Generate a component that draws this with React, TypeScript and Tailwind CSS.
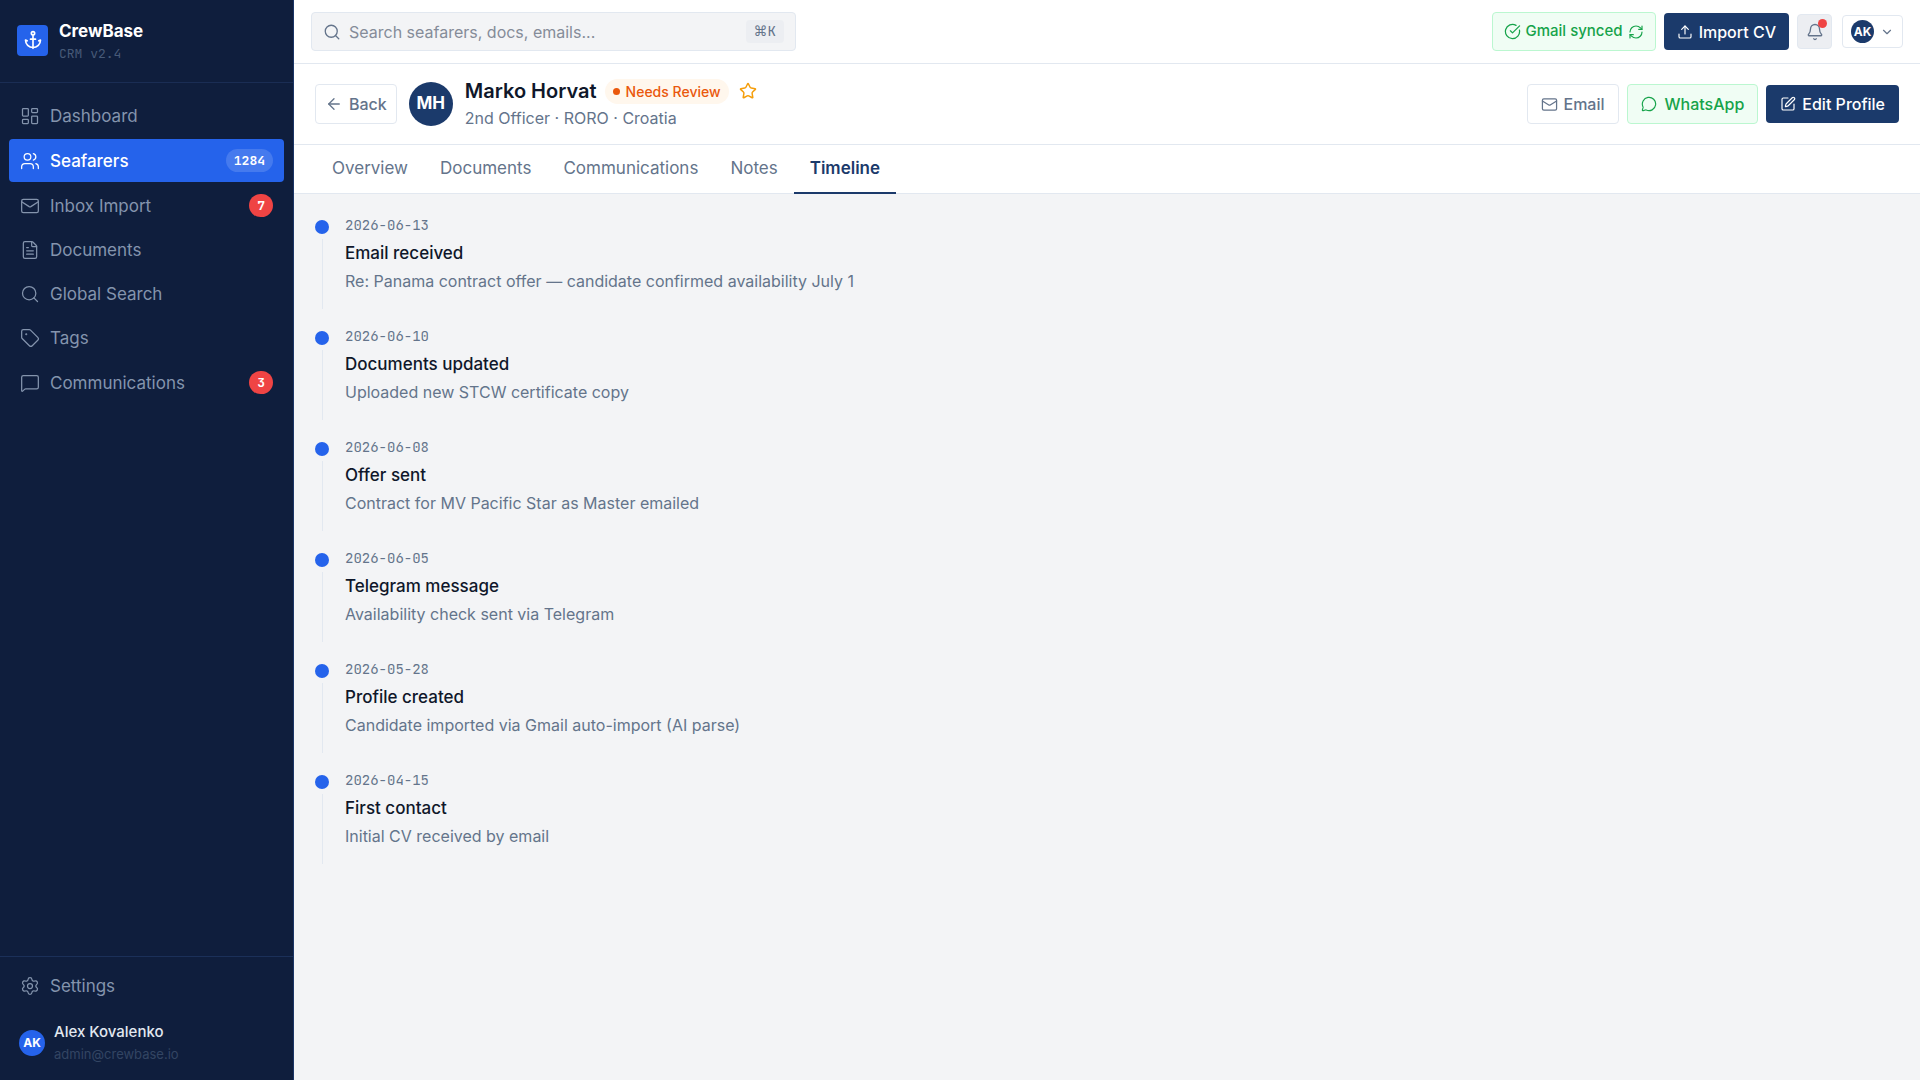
import { useState } from "react";
import {
  Anchor,
  ArrowLeft,
  Bell,
  ChevronDown,
  CircleCheckBig,
  FileText,
  LayoutDashboard,
  Mail,
  MessageCircle,
  MessageSquare,
  RefreshCw,
  Search,
  Settings,
  SquarePen,
  Star,
  Tag,
  Upload,
  Users,
  type LucideIcon,
} from "lucide-react";

interface NavItem {
  label: string;
  icon: LucideIcon;
  count?: number;
}

interface TimelineEvent {
  date: string;
  title: string;
  description: string;
}

const mono = "font-['JetBrains_Mono','DejaVu_Sans_Mono',monospace]";

const navItems: NavItem[] = [
  { label: "Dashboard", icon: LayoutDashboard },
  { label: "Seafarers", icon: Users, count: 1284 },
  { label: "Inbox Import", icon: Mail, count: 7 },
  { label: "Documents", icon: FileText },
  { label: "Global Search", icon: Search },
  { label: "Tags", icon: Tag },
  { label: "Communications", icon: MessageSquare, count: 3 },
];

const tabs = ["Overview", "Documents", "Communications", "Notes", "Timeline"];

const events: TimelineEvent[] = [
  {
    date: "2026-06-13",
    title: "Email received",
    description: "Re: Panama contract offer — candidate confirmed availability July 1",
  },
  { date: "2026-06-10", title: "Documents updated", description: "Uploaded new STCW certificate copy" },
  { date: "2026-06-08", title: "Offer sent", description: "Contract for MV Pacific Star as Master emailed" },
  { date: "2026-06-05", title: "Telegram message", description: "Availability check sent via Telegram" },
  { date: "2026-05-28", title: "Profile created", description: "Candidate imported via Gmail auto-import (AI parse)" },
  { date: "2026-04-15", title: "First contact", description: "Initial CV received by email" },
];

function Sidebar() {
  const [active, setActive] = useState("Seafarers");

  return (
    <aside className="w-[294px] shrink-0 flex flex-col bg-[#0f1e3d] border-r border-[#1b3566]">
      <div className="flex items-center gap-[11px] px-[17px] pt-[17px] pb-[19px] border-b border-[#1a2d54]">
        <div className="w-[31px] h-[31px] rounded-sm bg-[#2563eb] flex items-center justify-center">
          <Anchor className="w-5 h-5 text-white" />
        </div>
        <div>
          <div className="text-[17px] leading-7 font-bold text-white">CrewBase</div>
          <div className={`text-[13px] leading-[18px] text-[#475a78] ${mono}`}>CRM v2.4</div>
        </div>
      </div>

      <nav className="flex-1 flex flex-col gap-0.5 px-[9px] pt-3">
        {navItems.map(({ label, icon: Icon, count }) => {
          const isActive = label === active;
          return (
            <button
              key={label}
              onClick={() => setActive(label)}
              className={`flex items-center gap-2.5 px-[11px] py-2.5 rounded-sm text-[17px] leading-[22px] text-left ${
                isActive ? "bg-[#2563eb] text-white font-medium" : "text-[#8494ad] hover:text-white"
              }`}
            >
              <Icon className="w-5 h-5 shrink-0" strokeWidth={1.5} />
              <span className="flex-1">{label}</span>
              {count !== undefined && (
                <span
                  className={`px-2 rounded-full text-[13px] leading-[23px] font-bold text-white ${mono} ${
                    isActive ? "bg-white/15" : "bg-[#ef4444]"
                  }`}
                >
                  {count}
                </span>
              )}
            </button>
          );
        })}
      </nav>

      <div className="border-t border-[#1b3059] px-[9px] pt-2">
        <button className="w-full flex items-center gap-2.5 px-[11px] py-2.5 text-[17px] leading-[22px] text-[#8494ad] text-left">
          <Settings className="w-5 h-5" strokeWidth={1.5} />
          Settings
        </button>
        <div className="flex items-center gap-[9px] px-2.5 pt-3.5 pb-[15px]">
          <div className="w-[26px] h-[26px] rounded-full bg-[#2563eb] flex items-center justify-center text-xs font-bold text-white">
            AK
          </div>
          <div>
            <div className="text-[15px] leading-[22px] font-medium text-slate-200">Alex Kovalenko</div>
            <div className="text-[13px] leading-[22px] text-[#334563]">admin@crewbase.io</div>
          </div>
        </div>
      </div>
    </aside>
  );
}

function TopBar() {
  return (
    <header className="flex items-center justify-between px-[17px] py-3 bg-white border-b border-[#e2e8f0]">
      <label className="w-[485px] h-[39px] flex items-center gap-2 px-[11px] rounded-sm border border-[#e2e8f0] bg-[#f3f4f6]">
        <Search className="w-[18px] h-[18px] shrink-0 text-[#64748b]" strokeWidth={1.75} />
        <input
          type="text"
          aria-label="Search"
          placeholder="Search seafarers, docs, emails..."
          className="flex-1 min-w-0 bg-transparent outline-none text-base placeholder:text-[#858c99]"
        />
        <kbd className={`px-2 rounded-sm bg-[#eceef2] text-sm leading-[23px] text-[#64748b] ${mono}`}>
          <span className="font-['DejaVu_Sans',sans-serif]">⌘</span>K
        </kbd>
      </label>

      <div className="flex items-center gap-2">
        <button className="h-[39px] flex items-center gap-[5px] px-[11px] rounded-sm border border-[#bbf7d0] bg-[#f0fdf4] text-[15px] font-medium text-[#16a34a]">
          <CircleCheckBig className="w-[17px] h-[17px]" strokeWidth={1.75} />
          Gmail synced
          <RefreshCw className="w-4 h-4" strokeWidth={1.75} />
        </button>
        <button className="h-[37px] flex items-center gap-1.5 px-[13px] rounded-sm bg-[#1b3a6b] text-base font-medium text-white">
          <Upload className="w-4 h-4" strokeWidth={1.75} />
          Import CV
        </button>
        <button
          aria-label="Notifications"
          className="relative w-[35px] h-[35px] flex items-center justify-center rounded-sm border border-[#e2e8f0] bg-[#eceef2] text-[#64748b]"
        >
          <Bell className="w-[18px] h-[18px]" strokeWidth={1.75} />
          <span className="absolute top-1 right-1 w-[9px] h-[9px] rounded-full bg-[#ef4444]" />
        </button>
        <button
          aria-label="Account"
          className="ml-0.5 h-[33px] flex items-center gap-1.5 px-2 rounded-sm border border-[#e2e8f0] text-[#64748b]"
        >
          <span className="w-[23px] h-[23px] rounded-full bg-[#1b3a6b] flex items-center justify-center text-xs font-bold text-white">
            AK
          </span>
          <ChevronDown className="w-3.5 h-3.5" />
        </button>
      </div>
    </header>
  );
}

function ProfileHeader() {
  const [starred, setStarred] = useState(false);

  return (
    <div className="flex items-center justify-between px-[21px] py-3.5 bg-white border-b border-[#e2e8f0]">
      <div className="flex items-center gap-3">
        <button className="h-10 flex items-center gap-1.5 px-[9px] rounded-sm border border-[#e2e8f0] text-base font-medium text-[#64748b]">
          <ArrowLeft className="w-[18px] h-[18px]" strokeWidth={1.75} />
          Back
        </button>
        <div className="w-11 h-11 rounded-full bg-[#1b3a6b] flex items-center justify-center text-[17px] font-bold text-white">
          MH
        </div>
        <div>
          <div className="flex items-center gap-2">
            <h1 className="text-xl leading-[26px] font-semibold text-[#0f172a]">Marko Horvat</h1>
            <span className="flex items-center gap-1.5 px-2 rounded-full bg-[#fff7ed] text-sm leading-[25px] font-medium text-[#ea580c]">
              <span className="w-[7px] h-[7px] rounded-full bg-[#ea580c]" />
              Needs Review
            </span>
            <button aria-label="Star" onClick={() => setStarred(!starred)} className="ml-0.5 text-[#f59e0b]">
              <Star className="w-[18px] h-[18px]" fill={starred ? "currentColor" : "none"} />
            </button>
          </div>
          <p className="mt-0.5 text-base leading-6 text-[#64748b]">2nd Officer · RORO · Croatia</p>
        </div>
      </div>

      <div className="flex items-center gap-2">
        <button className="h-10 flex items-center gap-1.5 px-[13px] rounded-sm border border-[#e2e8f0] text-base font-medium text-[#64748b]">
          <Mail className="w-[17px] h-[17px]" strokeWidth={1.75} />
          Email
        </button>
        <button className="h-10 flex items-center gap-2 px-[13px] rounded-sm border border-[#bbf7d0] bg-[#f0fdf4] text-base font-medium text-[#16a34a]">
          <MessageCircle className="w-4 h-4" strokeWidth={1.75} />
          WhatsApp
        </button>
        <button className="h-[38px] flex items-center gap-1.5 px-3.5 rounded-sm bg-[#1b3a6b] text-base font-medium text-white">
          <SquarePen className="w-4 h-4" strokeWidth={1.75} />
          Edit Profile
        </button>
      </div>
    </div>
  );
}

function Timeline() {
  return (
    <ol className="p-[21px]">
      {events.map((event) => (
        <li key={event.date} className="flex gap-4 pb-[17px]">
          <div className="flex flex-col items-center pt-[5px]">
            <span className="w-3.5 h-3.5 rounded-full bg-[#2563eb]" />
            <span className="mt-[5px] w-px flex-1 bg-[#e2e8f0]" />
          </div>
          <div className="pb-4">
            <time className={`block text-sm leading-5 text-[#64748b] ${mono}`}>{event.date}</time>
            <h2 className="mt-[5px] text-[17px] leading-[26px] font-medium text-[#0f172a]">{event.title}</h2>
            <p className="mt-[3px] text-base leading-6 text-[#64748b]">{event.description}</p>
          </div>
        </li>
      ))}
    </ol>
  );
}

export default function App() {
  const [activeTab, setActiveTab] = useState("Timeline");

  return (
    <div className="h-screen flex bg-[#f3f4f6] font-[Inter,sans-serif]">
      <Sidebar />
      <div className="flex-1 min-w-0 flex flex-col">
        <TopBar />
        <ProfileHeader />
        <div role="tablist" className="flex px-[22px] bg-white border-b border-[#e2e8f0]">
          {tabs.map((tab) => (
            <button
              key={tab}
              role="tab"
              aria-selected={tab === activeTab}
              onClick={() => setActiveTab(tab)}
              className={`-mb-px px-4 pt-[11px] pb-3 text-[17px] leading-6 border-b-2 ${
                tab === activeTab
                  ? "border-[#1b3a6b] text-[#1b3a6b] font-semibold"
                  : "border-transparent text-[#64748b]"
              }`}
            >
              {tab}
            </button>
          ))}
        </div>
        <main className="flex-1 overflow-y-auto">{activeTab === "Timeline" && <Timeline />}</main>
      </div>
    </div>
  );
}
